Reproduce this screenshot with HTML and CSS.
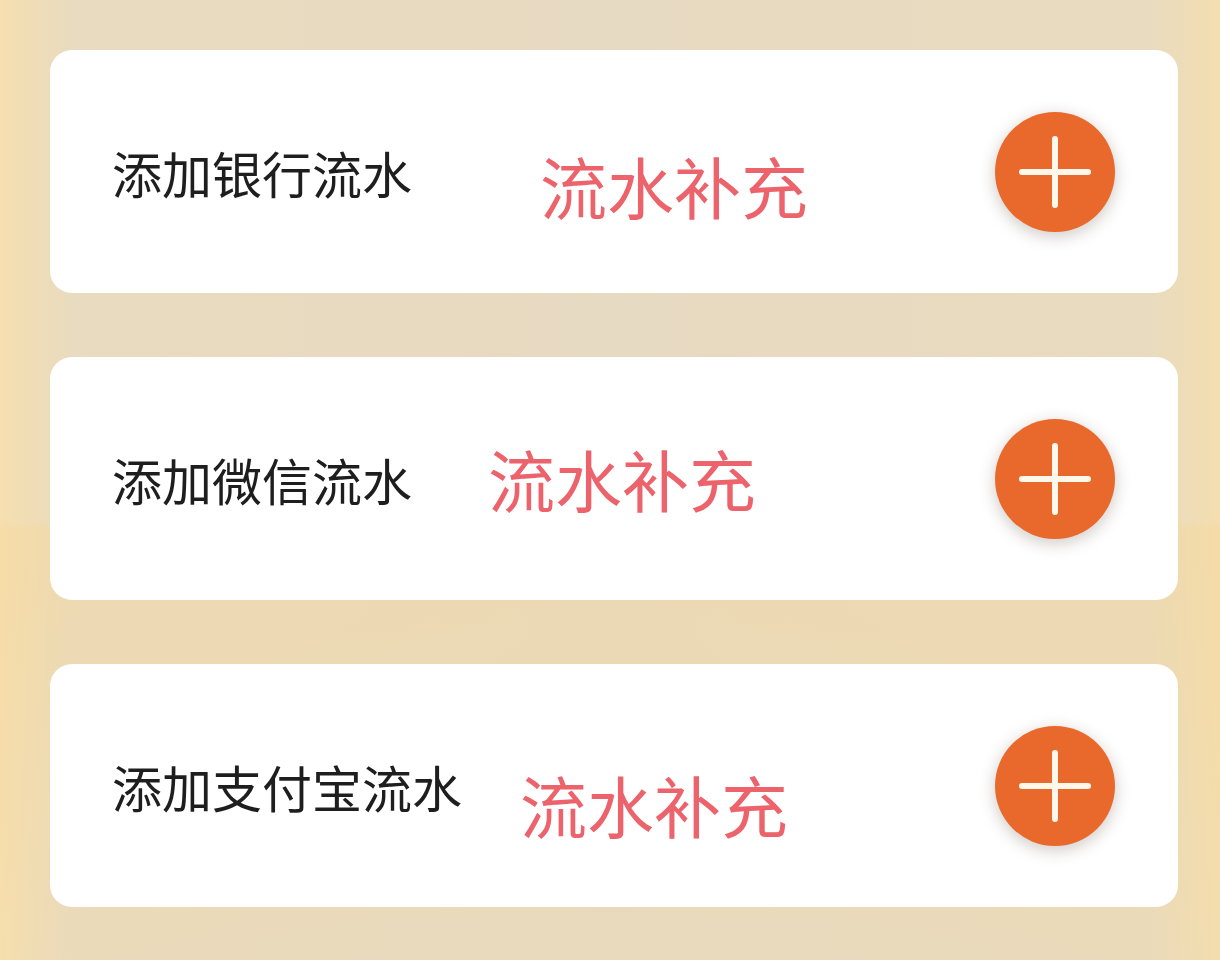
FILE: index.html
```html
<!DOCTYPE html>
<html lang="zh-CN">
<head>
  <meta charset="UTF-8">
  <title>添加流水</title>
  <link rel="stylesheet" href="styles.css">
</head>
<body>

<div class="flow-list">
  <div class="flow-card">
    <span class="flow-label">添加银行流水</span>
    <span class="flow-note note-bank">流水补充</span>
    <button class="add-button" aria-label="添加">
      <svg viewBox="0 0 120 120" width="120" height="120">
        <path d="M27 60 H93 M60 27 V93" stroke="#fff8ea" stroke-width="6" stroke-linecap="round" fill="none"/>
      </svg>
    </button>
  </div>

  <div class="flow-card">
    <span class="flow-label">添加微信流水</span>
    <span class="flow-note note-wechat">流水补充</span>
    <button class="add-button" aria-label="添加">
      <svg viewBox="0 0 120 120" width="120" height="120">
        <path d="M27 60 H93 M60 27 V93" stroke="#fff8ea" stroke-width="6" stroke-linecap="round" fill="none"/>
      </svg>
    </button>
  </div>

  <div class="flow-card">
    <span class="flow-label">添加支付宝流水</span>
    <span class="flow-note note-alipay">流水补充</span>
    <button class="add-button" aria-label="添加">
      <svg viewBox="0 0 120 120" width="120" height="120">
        <path d="M27 60 H93 M60 27 V93" stroke="#fff8ea" stroke-width="6" stroke-linecap="round" fill="none"/>
      </svg>
    </button>
  </div>
</div>

</body>
</html>
```

FILE: styles.css
```css
* { box-sizing: border-box; }
html, body { height: 100%; }
body {
  margin: 0;
  min-height: 960px;
  padding: 50px 42px 0 50px;
  font-family: "Noto Sans CJK SC", "Noto Sans", sans-serif;
  background:
    linear-gradient(to bottom, rgba(245, 214, 150, 0) 0, rgba(245, 214, 150, 0) 520px, rgba(245, 214, 150, 0.35) 530px, rgba(245, 214, 150, 0.1) 960px),
    linear-gradient(to right, #f6dfb0 0, #e9dbbf 70px, #e7dac2 50%, #e9dbbf 1150px, #f4deb0 100%);
}
.flow-list {
  display: flex;
  flex-direction: column;
  gap: 64px;
}
.flow-card {
  position: relative;
  height: 243px;
  background: #fff;
  border-radius: 22px;
  display: flex;
  align-items: center;
  justify-content: space-between;
  padding: 0 63px 0 62px;
}
.flow-label {
  font-size: 50px;
  color: #1e1e1e;
  line-height: 1;
}
.flow-note {
  position: absolute;
  top: 50%;
  font-size: 67px;
  line-height: 1;
  color: #ec636c;
  transform: translateY(-50%);
}
.note-bank { left: 490px; margin-top: 12px; }
.note-wechat { left: 438px; margin-top: -2px; }
.note-alipay { left: 470px; margin-top: 17px; }
.add-button {
  width: 120px;
  height: 120px;
  padding: 0;
  border: none;
  border-radius: 50%;
  background: #e8692b;
  box-shadow: 0 4px 16px rgba(60, 40, 20, 0.25);
  cursor: pointer;
  display: flex;
  align-items: center;
  justify-content: center;
}
.add-button svg { display: block; }
```
